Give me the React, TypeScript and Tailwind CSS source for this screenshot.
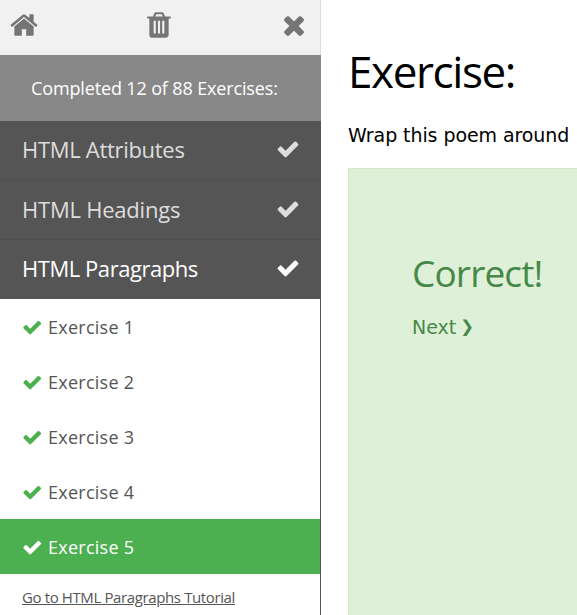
import React from 'react';

const paths = {
  check:
    'M1671 566q0 40-28 68l-724 724-136 136q-28 28-68 28t-68-28l-136-136-362-362q-28-28-28-68t28-68l136-136q28-28 68-28t68 28l294 295 656-657q28-28 68-28t68 28l136 136q28 28 28 68z',
  home: 'M1472 992v480q0 26-19 45t-45 19h-384v-384h-256v384h-384q-26 0-45-19t-19-45v-480q0-1 .5-3t.5-3l575-474 575 474q1 2 1 6zm223-69l-62 74q-8 9-21 11h-3q-13 0-21-7l-692-577-692 577q-12 8-24 7-13-2-21-11l-62-74q-8-10-7-23.5t11-21.5l719-599q32-26 76-26t76 26l244 204v-195q0-14 9-23t23-9h192q14 0 23 9t9 23v408l219 182q10 8 11 21.5t-7 23.5z',
  times:
    'M1490 1322q0 40-28 68l-136 136q-28 28-68 28t-68-28l-294-294-294 294q-28 28-68 28t-68-28l-136-136q-28-28-28-68t28-68l294-294-294-294q-28-28-28-68t28-68l136-136q28-28 68-28t68 28l294 294 294-294q28-28 68-28t68 28l136 136q28 28 28 68t-28 68l-294 294 294 294q28 28 28 68z',
  trash:
    'M704 1376v-704q0-14-9-23t-23-9h-64q-14 0-23 9t-9 23v704q0 14 9 23t23 9h64q14 0 23-9t9-23zm256 0v-704q0-14-9-23t-23-9h-64q-14 0-23 9t-9 23v704q0 14 9 23t23 9h64q14 0 23-9t9-23zm256 0v-704q0-14-9-23t-23-9h-64q-14 0-23 9t-9 23v704q0 14 9 23t23 9h64q14 0 23-9t9-23zm-544-992h448l-48-117q-7-9-17-11h-317q-10 2-17 11zm928 32v64q0 14-9 23t-23 9h-96v948q0 83-47 143.5t-113 60.5h-832q-66 0-113-58.5t-47-141.5v-952h-96q-14 0-23-9t-9-23v-64q0-14 9-23t23-9h309l70-167q15-37 54-63t79-26h320q40 0 79 26t54 63l70 167h309q14 0 23 9t9 23z',
};

function Icon({ name, className }: { name: keyof typeof paths; className: string }) {
  return (
    <svg viewBox="0 0 1792 1792" className={`shrink-0 fill-current ${className}`} aria-hidden="true">
      <path d={paths[name]} />
    </svg>
  );
}

const sections = [
  { title: 'HTML Attributes', style: 'h-[59px] pb-[2px] border-b border-[#4f4f4f] text-[#dddddd]', spacing: 'tracking-[-0.3px]' },
  { title: 'HTML Headings', style: 'h-[60px] pb-px border-b border-[#4f4f4f] text-[#dddddd]', spacing: 'tracking-[-0.22px]' },
  { title: 'HTML Paragraphs', style: 'h-[59px] pb-[2px] text-white', spacing: 'tracking-[-0.45px]' },
];

const exercises = [1, 2, 3, 4, 5];

export default function App() {
  return (
    <div className="flex h-[615px] w-[577px] overflow-hidden bg-white font-['Open_Sans','Noto_Sans',sans-serif]">
      <aside className="flex w-[321px] shrink-0 flex-col">
        <div className="flex h-[55px] items-start justify-between border-r border-[#dcdcdc] bg-[#f1f1f1] pt-[10px] pr-[11px] pl-[9px] text-[#757575]">
          <Icon name="home" className="size-[30px]" />
          <Icon name="trash" className="size-[30px]" />
          <Icon name="times" className="size-[30px]" />
        </div>
        <div className="flex h-[66px] items-center bg-[#888888] pl-[31px] text-[18px] whitespace-nowrap text-white">
          <span className="tracking-[-0.14px]">Completed 12 of 88 Exercises:</span>
        </div>
        {sections.map((s) => (
          <div
            key={s.title}
            className={`flex items-center justify-between bg-[#555555] pr-[21.5px] pl-[22px] text-[22px] whitespace-nowrap ${s.style}`}
          >
            <span className={s.spacing}>{s.title}</span>
            <Icon name="check" className="mb-px size-[24px]" />
          </div>
        ))}
        <div className="flex grow flex-col border-r border-[#555555]">
          {exercises.map((n) => (
            <div
              key={n}
              className={`flex h-[55px] shrink-0 items-center pt-px pl-[22px] text-[18px] whitespace-nowrap ${
                n === 5 ? 'bg-[#4caf50] text-white' : 'text-[#555555]'
              }`}
            >
              <Icon name="check" className={n === 5 ? 'size-[20.5px] text-white' : 'size-[20.5px] text-[#4caf50]'} />
              <span className="pl-[5.5px] tracking-[0.25px]">Exercise {n}</span>
            </div>
          ))}
          <a className="pt-[12px] pl-[22px] text-[15px] leading-[22px] whitespace-nowrap text-[#555555]">
            <span className="tracking-[-0.38px] underline">Go to HTML Paragraphs Tutorial</span>
          </a>
        </div>
      </aside>
      <main className="flex w-[256px] shrink-0 flex-col overflow-hidden pl-[27px]">
        <h1 className="pt-[41px] text-[44px] leading-[60px] tracking-[-1.4px] whitespace-nowrap text-black">Exercise:</h1>
        <p className="pt-[21px] font-['DejaVu_Sans',sans-serif] text-[19px] leading-[26px] tracking-[-0.08px] whitespace-nowrap text-black">
          Wrap this poem around
        </p>
        <section className="mt-[20px] w-[260px] grow border-t border-l border-[#d6e9c6] bg-[#dff0d8] pl-[63px] text-[#468847]">
          <h2 className="pt-[79px] text-[37px] leading-[50px] tracking-[-0.85px] whitespace-nowrap">Correct!</h2>
          <p className="flex items-center pt-[16px] font-['DejaVu_Sans',sans-serif] text-[19px] leading-[26px]">
            <span>Next</span>
            <span className="ml-[4px] text-[16.5px]">❯</span>
          </p>
        </section>
      </main>
    </div>
  );
}
